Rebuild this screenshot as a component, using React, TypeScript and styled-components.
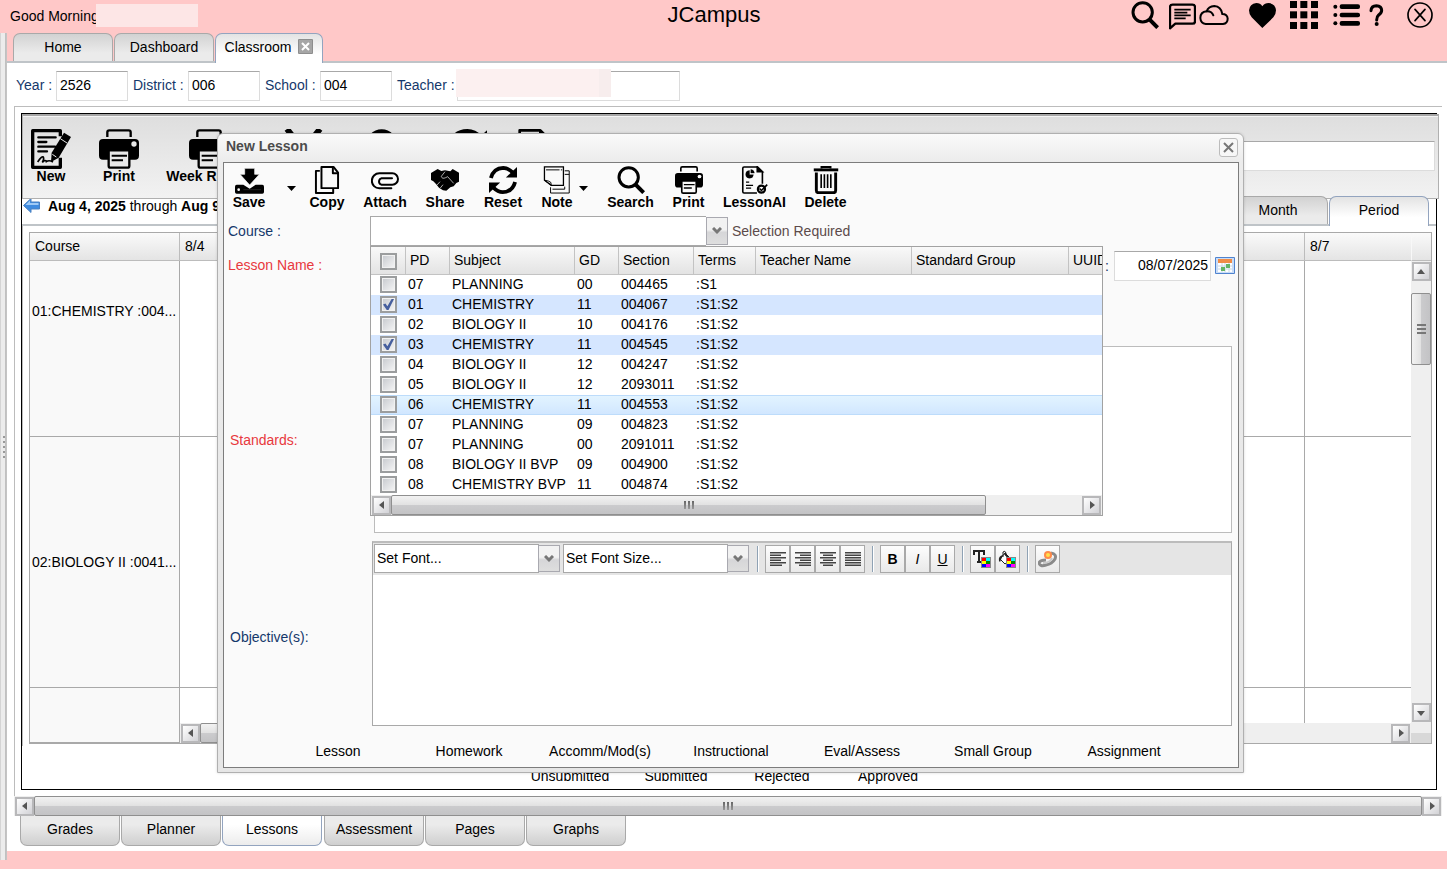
import React from 'react';
import styled, { createGlobalStyle, css } from 'styled-components';

const GlobalStyle = createGlobalStyle`
  *, *::before, *::after { box-sizing: border-box; }
  body { margin: 0; background: #ffc8c8; }
  body, input, button, select, table {
    font-family: "Liberation Sans", Arial, sans-serif;
    font-size: 14px;
    line-height: 16px;
    color: #000;
  }
  button { padding: 0; border: 0; background: none; cursor: pointer; }
`;

/* ---------- page shell ---------- */

const Page = styled.div`
  position: relative;
  display: flex;
  flex-direction: column;
  min-height: 100vh;
  overflow: hidden;
  background: #ffc8c8;
`;

const Header = styled.header`
  display: grid;
  grid-template-columns: 1fr auto 1fr;
  height: 33px;
  padding-right: 14px;
`;

const Greeting = styled.div`
  display: flex;
  align-items: center;
  padding: 0 0 2px 10px;
  white-space: nowrap;
`;

const HiddenName = styled.span`
  width: 102px;
  height: 23px;
  margin-left: -3px;
  background: #fde6e6;
`;

const Title = styled.h1`
  margin: 0;
  padding-right: 5px;
  font-size: 22px;
  line-height: 30px;
  font-weight: normal;
`;

const HeaderIcons = styled.nav`
  display: flex;
  align-items: flex-start;
  justify-content: flex-end;
`;

const HeaderButton = styled.button<{ $gap: number }>`
  display: flex;
  align-items: center;
  height: 30px;
  margin-left: ${(p) => p.$gap}px;
`;

const Body = styled.div`
  display: flex;
  flex: 1;
`;

const Splitter = styled.div`
  display: flex;
  flex-direction: column;
  align-items: center;
  justify-content: center;
  gap: 3px;
  width: 7px;
  margin-bottom: 9px;
  background: linear-gradient(to right, #d4d4d4 0 1px, #ececec 1px 5px, #c0c0c0 5px 6px, #c4c4c4 6px);
`;

const Grip = styled.i`
  width: 2px;
  height: 2px;
  background: #999;
`;

const Main = styled.main`
  display: flex;
  flex: 1;
  flex-direction: column;
  min-width: 0;
  padding-bottom: 18px;
`;

const TabStrip = styled.nav`
  display: flex;
  align-items: flex-start;
  gap: 1px;
  padding-left: 6px;
`;

const TopTab = styled.button<{ $active?: boolean }>`
  display: flex;
  align-items: center;
  justify-content: center;
  gap: 7px;
  width: 100px;
  height: 28px;
  padding-bottom: 2px;
  border: 1px solid #a9a9a9;
  border-bottom: 0;
  border-radius: 7px 7px 0 0;
  background: linear-gradient(#d2d2d2, #ebebeb 70%);
  ${(p) =>
    p.$active &&
    css`
      position: relative;
      z-index: 1;
      width: 108px;
      height: 30px;
      margin-bottom: -2px;
      padding-bottom: 4px;
      border-color: #93a4bf;
      background: linear-gradient(#e3e3e3, #ffffff 70%);
    `}
`;

const Panel = styled.section`
  display: flex;
  flex: 1;
  flex-direction: column;
  padding-bottom: 5px;
  border-top: 2px solid #bfc4c8;
  background: #fff;
`;

const FieldBar = styled.div`
  display: flex;
  height: 43px;
  padding: 8px 0 0 9px;
`;

const Field = styled.label<{ $width: number }>`
  display: flex;
  flex: none;
  width: ${(p) => p.$width}px;
  line-height: 28px;
  color: #15386b;
  white-space: nowrap;
`;

const Lead = styled.span`
  padding-left: 5px;
`;

const TextBox = styled.input`
  min-width: 0;
  height: 30px;
  padding: 0 3px 2px;
  border: 1px solid #dcdcdc;
  border-top-color: #a8a8a8;
  background: #fff;
  outline: none;
`;

const FieldInput = styled(TextBox)<{ $width: number }>`
  width: ${(p) => p.$width}px;
  margin-left: auto;
`;

const Masked = styled.span`
  position: relative;
  display: flex;
  margin-left: auto;
  &::after {
    content: '';
    position: absolute;
    top: -2px;
    left: -1px;
    width: 155px;
    height: 28px;
    background: linear-gradient(to right, #fcf0f0 143px, #f7eded 143px);
  }
`;

const Frame = styled.div`
  display: flex;
  flex: 1;
  flex-direction: column;
  margin: 0 5px 0 7px;
  padding: 6px 5px 6px 6px;
  border-top: 1px solid #bcbcbc;
  border-left: 1px solid #bcbcbc;
`;

const LessonBox = styled.div`
  display: flex;
  flex: 1;
  flex-direction: column;
  border: 1px solid #000;
`;

const MainToolbar = styled.div`
  --paper: #e9e9e9;
  position: relative;
  display: flex;
  height: 85px;
  margin-right: -3px;
  padding: 13px 3px 0 7px;
  border: 1px solid #b0b0b0;
  border-top: 2px solid #a6a6a6;
  background: linear-gradient(#dedede, #f2f2f2);
  box-shadow: inset 0 1px #f4f4f4;
  svg { margin-bottom: -1px; }
`;

const ToolButton = styled.button<{ $width: number; $after?: number }>`
  display: flex;
  flex: none;
  flex-direction: column;
  align-items: center;
  justify-content: flex-start;
  width: ${(p) => p.$width}px;
  margin-right: ${(p) => p.$after ?? 0}px;
  font-weight: bold;
  white-space: nowrap;
`;

const QuickBox = styled(TextBox)`
  flex: 1;
  margin-top: 12px;
`;

const DateBar = styled.div`
  display: flex;
  align-items: flex-start;
  justify-content: space-between;
  height: 27px;
  padding: 0 7px 0 1px;
  border-bottom: 2px solid #bfc4c8;
`;

const WeekRange = styled.div`
  display: flex;
  align-items: center;
  gap: 8px;
  height: 13px;
`;

const ViewTabs = styled.div`
  display: flex;
  align-items: flex-start;
  gap: 1px;
  height: 25px;
  margin-top: -3px;
`;

const ViewTab = styled(TopTab)`
  position: relative;
`;

const ViewTabActive = styled(TopTab)`
  width: 100px;
`;

const TabBody = styled.div`
  display: flex;
  flex: 1;
  flex-direction: column;
  padding: 6px 4px 2px 6px;
  border-left: 1px solid #bcbcbc;
`;

/* ---------- schedule grid ---------- */

const GridBox = styled.div`
  position: relative;
  flex: 1;
  min-height: 511px;
  overflow: hidden;
  border: 1px solid #a9a9a9;
`;

const Schedule = styled.table`
  width: 1650px;
  border-collapse: separate;
  border-spacing: 0;
  table-layout: fixed;
`;

const DayHead = styled.th`
  height: 28px;
  padding: 0 5px 2px;
  border-right: 1px solid #bcbcbc;
  border-bottom: 1px solid #bcbcbc;
  background: linear-gradient(#fafafa, #e4e4e4);
  font-weight: normal;
  text-align: left;
`;

const CourseCell = styled.th<{ $height: number; $lift?: number }>`
  height: ${(p) => p.$height}px;
  padding: 0 0 ${(p) => p.$lift ?? 0}px 2px;
  border-right: 1px solid #a9a9a9;
  border-bottom: 1px solid #a9a9a9;
  background: #f9f9f9;
  font-weight: normal;
  text-align: left;
  white-space: nowrap;
`;

const DayCell = styled.td`
  border-right: 1px solid #a9a9a9;
  border-bottom: 1px solid #a9a9a9;
  background: #fff;
`;

const HeadCorner = styled.div`
  position: absolute;
  top: 0;
  right: 0;
  width: 20px;
  height: 28px;
  border-left: 1px solid #f8f8f8;
  border-bottom: 1px solid #bcbcbc;
  background: linear-gradient(#fafafa, #e4e4e4);
`;

const Legend = styled.div`
  display: flex;
  justify-content: center;
  padding: 22px 0 5px;
  text-align: center;
`;

const LegendItem = styled.span`
  width: 106px;
`;

/* ---------- scroll bars ---------- */

const HBar = styled.div`
  display: flex;
  align-items: center;
  height: 20px;
  padding: 0 1px;
  background: #efefef;
`;

const GridHBar = styled(HBar)`
  position: absolute;
  right: 20px;
  bottom: 0;
  left: 150px;
`;

const VBar = styled.div`
  position: absolute;
  top: 28px;
  right: 0;
  bottom: 20px;
  display: flex;
  flex-direction: column;
  align-items: center;
  width: 20px;
  padding: 1px 0;
  background: #efefef;
`;

const BarCorner = styled.div`
  position: absolute;
  right: 0;
  bottom: 0;
  width: 20px;
  height: 20px;
  background: linear-gradient(#eee 50%, #d8d8d8 50%);
`;

const ArrowButton = styled.button`
  display: flex;
  flex: none;
  align-items: center;
  justify-content: center;
  width: 19px;
  height: 19px;
  border: 2px solid #b8b8ba;
  background: linear-gradient(135deg, #fff, #d2d2d6);
`;

const HThumb = styled.div<{ $width?: number }>`
  display: flex;
  flex: ${(p) => (p.$width ? 'none' : 1)};
  align-items: center;
  justify-content: center;
  gap: 2px;
  width: ${(p) => (p.$width ? `${p.$width}px` : 'auto')};
  height: 20px;
  border: 1px solid #8f8f8f;
  border-radius: 2px;
  background: linear-gradient(#f2f2f2, #e2e2e2 48%, #cbcbcd 52%, #c3c3c5);
  i { width: 2px; height: 8px; background: linear-gradient(#666, #999); }
`;

const VThumb = styled.div`
  display: flex;
  flex-direction: column;
  align-items: center;
  justify-content: center;
  gap: 2px;
  width: 20px;
  height: 72px;
  margin-top: 12px;
  border: 1px solid #8f8f8f;
  border-radius: 2px;
  background: linear-gradient(to right, #f2f2f2, #e2e2e2 48%, #cbcbcd 52%, #c3c3c5);
  i { width: 9px; height: 2px; background: #777; }
`;

const Push = styled.span`
  flex: 1;
`;

const FrameBar = styled(HBar)`
  margin: 0 5px 0 7px;
`;

const BottomTabs = styled.nav`
  display: flex;
  gap: 1px;
  padding-left: 13px;
`;

const BottomTab = styled.button<{ $active?: boolean }>`
  width: 100px;
  height: 30px;
  margin-right: ${(p) => (p.$active ? 1 : 0)}px;
  padding-bottom: 4px;
  border: 1px solid ${(p) => (p.$active ? '#93a4bf' : '#a9a9a9')};
  border-top: 0;
  border-radius: 0 0 7px 7px;
  background: ${(p) => (p.$active ? 'linear-gradient(#fff 30%, #ececec)' : 'linear-gradient(#ebebeb 30%, #cfcfcf)')};
`;

/* ---------- dialog ---------- */

const Dialog = styled.section`
  --paper: #fafafa;
  position: absolute;
  top: 133px;
  right: 203px;
  left: 217px;
  z-index: 5;
  padding: 0 4px 4px 5px;
  border: 1px solid #b0b0b0;
  border-radius: 6px 6px 0 0;
  background: linear-gradient(#fafafa, #ececec 28px, #e6e6e6);
  box-shadow: 0 0 3px rgba(0, 0, 0, 0.15);
`;

const DialogTitle = styled.header`
  display: flex;
  align-items: center;
  justify-content: space-between;
  height: 28px;
  padding: 0 1px 4px 3px;
  h2 { margin: 0; font-size: 14px; color: #4c4c4c; }
`;

const CloseButton = styled.button`
  display: flex;
  align-items: center;
  justify-content: center;
  width: 19px;
  height: 19px;
  border: 1px solid #bcbcbc;
  border-radius: 3px;
  margin-top: 3px;
  background: #f7f7f7;
`;

const DialogBody = styled.form`
  border: 1px solid #7c7c7c;
  background: #fafafa;
`;

const DialogTools = styled.div`
  display: flex;
  height: 53px;
  padding: 3px 0 0 2px;
`;

const CaretButton = styled.button<{ $width: number; $after?: number }>`
  width: ${(p) => p.$width}px;
  height: 28px;
  margin: 6px ${(p) => p.$after ?? 0}px 0 0;
`;

const FormRow = styled.div<{ $height: number; $top?: number }>`
  display: flex;
  align-items: flex-start;
  height: ${(p) => p.$height}px;
  padding-top: ${(p) => p.$top ?? 0}px;
  padding-right: 6px;
`;

const RowLabel = styled.label<{ $width: number; $indent: number; $required?: boolean; $lift?: number }>`
  flex: none;
  align-self: center;
  width: ${(p) => p.$width}px;
  padding-left: ${(p) => p.$indent}px;
  padding-bottom: ${(p) => p.$lift ?? 0}px;
  color: ${(p) => (p.$required ? '#e8383d' : '#15386b')};
`;

const Combo = styled.div`
  position: relative;
  display: flex;
  width: 358px;
`;

const ComboInput = styled(TextBox)`
  flex: 1;
  border-color: #a8a8a8;
  border-right: 0;
`;

const Trigger = styled.button`
  display: flex;
  align-items: center;
  justify-content: center;
  width: 22px;
  height: 28px;
  margin-top: 1px;
  border: 1px solid #a9a9b0;
  background: linear-gradient(#f2f2f2 45%, #d6d6d8 55%, #dedede);
`;

const Hint = styled.span`
  align-self: center;
  margin-left: 4px;
  color: #5c4a4a;
`;

const DateLabel = styled.label`
  display: flex;
  align-items: center;
  gap: 5px;
  margin-left: auto;
  color: #15386b;
`;

const DateBox = styled(TextBox)`
  width: 97px;
  padding-right: 2px;
  text-align: right;
`;

const CalendarButton = styled.button`
  display: flex;
  margin: 6px -3px 0 4px;
`;

const StandardsBox = styled.textarea`
  flex: 1;
  height: 187px;
  margin-left: 2px;
  border: 1px solid #bcbcbc;
  background: #fff;
  resize: none;
  outline: none;
`;

const Editor = styled.div`
  flex: 1;
  height: 185px;
  border: 1px solid #a9a9a9;
  border-top: 2px solid #bcbcbc;
  background: #fff;
`;

const EditorBar = styled.div`
  display: flex;
  align-items: flex-start;
  height: 32px;
  padding: 1px;
  background: #e5e5e5;
`;

const SelectWrap = styled.span`
  position: relative;
  flex: none;
  width: 186px;
  margin-right: 3px;
  & + & { margin-right: 1px; }
`;

const Select = styled.select`
  width: 165px;
  height: 29px;
  padding: 0 2px 2px;
  border: 1px solid #a8a8a8;
  border-radius: 0;
  background: #fff;
  appearance: none;
  outline: none;
`;

const SelectArrow = styled.span`
  position: absolute;
  top: 1px;
  right: 0;
  display: flex;
  align-items: center;
  justify-content: center;
  width: 22px;
  height: 27px;
  border: 1px solid #a9a9b0;
  background: linear-gradient(#f2f2f2 45%, #d6d6d8 55%, #dedede);
  pointer-events: none;
`;

const Divider = styled.span`
  width: 2px;
  height: 26px;
  margin: 2px 6px 0 7px;
  border-left: 1px solid #8fa2b4;
  border-right: 1px solid #fff;
`;

const FormatButton = styled.button<{ $style?: 'bold' | 'italic' | 'underline' }>`
  display: flex;
  flex: none;
  align-items: center;
  justify-content: center;
  width: 25px;
  height: 28px;
  margin-top: 1px;
  border: 1px solid #a9a9a9;
  background: linear-gradient(#fdfdfd, #e9e9e9);
  font-weight: ${(p) => (p.$style === 'bold' ? 'bold' : 'normal')};
  font-style: ${(p) => (p.$style === 'italic' ? 'italic' : 'normal')};
  text-decoration: ${(p) => (p.$style === 'underline' ? 'underline' : 'none')};
`;

const SectionTabs = styled.nav`
  display: flex;
  justify-content: center;
  height: 34px;
`;

const SectionTab = styled.button`
  width: 131px;
  padding-top: 2px;
`;

/* ---------- course menu ---------- */

const Menu = styled.div`
  position: absolute;
  top: 30px;
  left: 0;
  z-index: 2;
  width: 733px;
  overflow: hidden;
  border: 1px solid #a2a2a2;
  background: #fff;
`;

const MenuTable = styled.table`
  width: 731px;
  border-collapse: separate;
  border-spacing: 0;
  table-layout: fixed;
`;

const MenuHead = styled.th<{ $width: number }>`
  width: ${(p) => p.$width}px;
  height: 28px;
  padding: 0 0 2px 4px;
  overflow: hidden;
  border-right: 1px solid #c3c3c3;
  border-bottom: 1px solid #c3c3c3;
  background: linear-gradient(#f9f9f9, #e3e3e3);
  font-weight: normal;
  text-align: left;
  white-space: nowrap;
  &:first-child { padding: 2px 0 0; }
  &:last-child { border-right: 0; }
`;

const rowTone = {
  plain: css`background: #fff;`,
  picked: css`background: #d5e6ff;`,
  hover: css`
    background: linear-gradient(#e3f4ff, #d0e6ff);
    box-shadow: inset 0 1px #bddcfb, inset 0 -1px #bddcfb;
  `,
};

const MenuRow = styled.tr<{ $tone: keyof typeof rowTone }>`
  ${(p) => rowTone[p.$tone]}
`;

const MenuCell = styled.td`
  height: 20px;
  padding: 0 0 2px 2px;
  white-space: nowrap;
  &:first-child { padding: 0 0 1px; }
`;

const Check = styled.input`
  display: block;
  position: relative;
  width: 17px;
  height: 17px;
  margin: 0 auto;
  border: 2px solid #9b9d9e;
  background: linear-gradient(135deg, #c6c9ce, #f6f6f6);
  box-shadow: inset 0 0 0 1px #f1f1f1;
  appearance: none;
  &:checked::before {
    content: '';
    position: absolute;
    inset: 1px;
    background: #465f9e;
    clip-path: polygon(0 50%, 22% 40%, 40% 65%, 78% 0, 100% 0, 50% 100%, 34% 100%);
  }
`;

/* ---------- icons ---------- */

type Size = { size: number };

const SearchIcon = ({ size }: Size) => (
  <svg width={size} height={size} viewBox="0 0 84 84" fill="none" stroke="#000">
    <circle cx="35" cy="34" r="29" strokeWidth="9" />
    <path d="M56 56 80 80" strokeWidth="12" />
  </svg>
);

const MessageIcon = () => (
  <svg width="27" height="30" viewBox="0 -9 81 90" fill="none" stroke="#000">
    <path d="M3 76V12Q3 5 11 5H70Q78 5 78 12V55Q78 62 70 62H19Z" strokeWidth="7" strokeLinejoin="round" />
    <path d="M16 20H65M16 29H55M16 37H65M16 46H50" strokeWidth="5" />
  </svg>
);

const CloudIcon = () => (
  <svg width="30" height="22" viewBox="0 0 90 66" fill="none" stroke="#000" strokeWidth="6">
    <path d="M20 60H72Q86 58 86 44 85 30 70 30 66 7 46 6 28 7 23 22 4 24 4 42 5 58 20 60Z" />
    <path d="M23 22Q38 21 43 34" strokeLinecap="round" />
  </svg>
);

const HeartIcon = () => (
  <svg width="27" height="25" viewBox="0 0 81 75">
    <path d="M40 75 8 43Q0 34 0 22 2 2 22 0 34 0 40 10 47 0 59 0 79 2 81 22 81 34 73 43Z" />
  </svg>
);

const AppsIcon = () => (
  <svg width="28" height="28" viewBox="0 0 84 84">
    {[0, 31, 63].map((y) => [0, 31, 63].map((x) => <rect key={`${x}-${y}`} x={x} y={y} width="21" height="21" />))}
  </svg>
);

const ListIcon = () => (
  <svg width="27" height="22" viewBox="0 0 81 66">
    {[0, 25, 50].map((y) => (
      <g key={y}>
        <circle cx="7" cy={y + 8} r="6" />
        <rect x="20" y={y + 1} width="61" height="14" rx="6" />
      </g>
    ))}
  </svg>
);

const HelpIcon = () => (
  <svg width="15" height="22" viewBox="0 0 45 66">
    <path d="M6 20Q7 5 22 5 38 6 38 19 38 27 29 33 23 38 23 48" fill="none" stroke="#000" strokeWidth="9" strokeLinecap="round" />
    <circle cx="23" cy="60" r="6" />
  </svg>
);

const ExitIcon = () => (
  <svg width="26" height="26" viewBox="0 0 78 78" fill="none" stroke="#000">
    <circle cx="39" cy="39" r="36" strokeWidth="5" />
    <path d="M24 22 54 56M54 22 24 56" strokeWidth="5" strokeLinecap="round" />
  </svg>
);

const TabCloseIcon = () => (
  <svg width="15" height="15" viewBox="0 0 15 15">
    <rect width="15" height="15" rx="1" fill="#8e8e8e" />
    <rect x="1" y="1" width="13" height="13" fill="#a6a6a6" />
    <path d="M4 4 11 11M11 4 4 11" stroke="#fff" strokeWidth="2" />
  </svg>
);

const NewIcon = () => (
  <svg width="40" height="40" viewBox="0 0 120 120" fill="none" stroke="#000">
    <path d="M88 22V5H5V115H88V86" strokeWidth="10" strokeLinejoin="round" />
    <path d="M22 25H74M22 39H46M22 53H72M22 67H48" strokeWidth="7" strokeLinecap="round" />
    <path d="M20 99Q32 80 37 84 40 90 34 100 44 90 46 98 54 92 66 99" strokeWidth="5" />
    <path d="M99 11 120 24 83 86 60 99 62 71Z" fill="#000" stroke="none" />
    <path d="M88 29 108 42M64 76 76 84" strokeWidth="3" stroke="var(--paper)" />
  </svg>
);

const PrintIcon = ({ size }: Size) => (
  <svg width={size} height={size} viewBox="0 0 120 120">
    <path d="M25 24V10Q25 4 31 4H89Q95 4 95 10V24" fill="none" stroke="#000" strokeWidth="7" />
    <rect y="30" width="120" height="62" rx="12" />
    <circle cx="105" cy="45" r="8" fill="var(--paper)" />
    <path d="M29 64H91V110Q91 116 85 116H35Q29 116 29 110Z" fill="var(--paper)" stroke="#000" strokeWidth="7" />
    <path d="M38 80H84M38 94H72" stroke="#000" strokeWidth="6" />
  </svg>
);

const ToolsIcon = () => (
  <svg width="40" height="40" viewBox="0 0 40 40" fill="none" stroke="#000" strokeWidth="6">
    <path d="M4 0 33 38M37 0 7 38" />
  </svg>
);

const ResetIcon = ({ size }: Size) => (
  <svg width={size} height={size} viewBox="0 0 88 88">
    <g>
      <path d="M6 38Q14 7 45 6 60 6 74 20" fill="none" stroke="#000" strokeWidth="12" />
      <path d="M88 3V36H53Z" />
    </g>
    <g transform="rotate(180 44 44)">
      <path d="M6 38Q14 7 45 6 60 6 74 20" fill="none" stroke="#000" strokeWidth="12" />
      <path d="M88 3V36H53Z" />
    </g>
  </svg>
);

const FileIcon = () => (
  <svg width="40" height="40" viewBox="0 0 120 120" fill="none" stroke="#000" strokeWidth="8">
    <path d="M14 116V4H76L100 28V116Z" strokeLinejoin="round" />
    <path d="M76 4V28H100" />
  </svg>
);

const SaveIcon = () => (
  <svg width="29" height="28" viewBox="0 0 87 84">
    <path d="M0 62Q0 56 5 56H25L44 68 62 56H82Q87 56 87 62V78Q87 83 82 83H5Q0 83 0 78Z" />
    <path d="M29 7H59V25H73L44 57 15 25H29Z" stroke="#fafafa" strokeWidth="2" />
    <circle cx="11" cy="71" r="4" fill="#fafafa" />
    <path d="M25 71H78" stroke="#333" strokeWidth="2" />
  </svg>
);

const CopyIcon = () => (
  <svg width="28" height="28" viewBox="0 0 84 86" fill="none" stroke="#000" strokeWidth="6" strokeLinejoin="round">
    <path d="M20 15H8V83H61V70" />
    <path d="M25 3H62L76 20V68H25Z" />
    <path d="M60 4V22H76" />
  </svg>
);

const AttachIcon = () => (
  <svg width="28" height="28" viewBox="0 0 84 84" fill="none" stroke="#000" strokeWidth="6" strokeLinecap="round">
    <path d="M61 67H25A22 22 0 0 1 25 22H64A17 17 0 0 1 64 56H31A10 10 0 0 1 31 37H63" />
  </svg>
);

const ShareIcon = () => (
  <svg width="28" height="28" viewBox="0 0 84 84">
    <path d="M0 21 20 9 31 15 42 13 58 16 65 9 84 20V47L76 51 68 61 58 64 46 74 36 73 24 65 15 54 7 46 0 42Z" />
    <path d="M42 17 31 31Q33 40 44 35L50 32 68 52M18 57 27 47M28 66 36 56" fill="none" stroke="#fafafa" strokeWidth="2" />
  </svg>
);

const NoteIcon = () => (
  <svg width="28" height="28" viewBox="0 0 84 87" fill="none" stroke="#000" strokeWidth="4">
    <path d="M3 44V3H62V60H24Z" />
    <path d="M3 44 24 60Q26 49 16 47L3 44M8 12H50M54 12H58" strokeWidth="3" />
    <path d="M66 15H80V84H22V66M66 26H80M66 64V72H28" strokeWidth="3" />
  </svg>
);

const LessonIcon = () => (
  <svg width="28" height="28" viewBox="0 0 84 87" fill="none" stroke="#000" strokeWidth="5">
    <path d="M48 84H8Q4 84 4 79V7Q4 3 8 3H50L65 18V55" />
    <path d="M49 3V18H65Z" fill="#000" />
    <path d="M25 14A12 12 0 1 0 37 27H25Z" fill="#000" strokeWidth="1" />
    <path d="M29 11A12 12 0 0 1 40 22H29Z" fill="#000" strokeWidth="1" />
    <path d="M14 50H24M14 60H36M14 69H30" strokeWidth="4" />
    <circle cx="62" cy="72" r="11" strokeWidth="7" />
    <path d="M56 70 62 76 80 58" strokeWidth="5" />
  </svg>
);

const DeleteIcon = () => (
  <svg width="28" height="28" viewBox="0 0 84 87" fill="none" stroke="#000">
    <path d="M28 8V3H56V8" strokeWidth="6" />
    <path d="M4 12H80" strokeWidth="9" />
    <path d="M12 20V76Q12 83 19 83H65Q72 83 72 76V20" strokeWidth="9" />
    <path d="M27 26V68M37 26V68M47 26V68M57 26V68" strokeWidth="5" />
  </svg>
);

const CaretIcon = () => (
  <svg width="9" height="5" viewBox="0 0 18 10">
    <path d="M0 0H18L9 10Z" />
  </svg>
);

const ChevronIcon = () => (
  <svg width="10" height="8" viewBox="0 0 10 8">
    <path d="M1 1 5 5 9 1" fill="none" stroke="#777" strokeWidth="3" />
  </svg>
);

const BackIcon = () => (
  <svg width="17" height="15" viewBox="0 0 34 30">
    <path d="M1 15 16 1V8H33V22H16V29Z" fill="#3f8be0" stroke="#4a80c0" strokeWidth="2" />
    <path d="M5 14 14 5V10H31V14Z" fill="#9fcaf6" />
  </svg>
);

const CalendarIcon = () => (
  <svg width="20" height="17" viewBox="0 0 20 17">
    <rect width="20" height="17" rx="1" fill="#4f83cf" />
    <rect x="1" y="1" width="18" height="15" fill="#c8dcf7" />
    <rect x="3" y="2" width="14" height="13" fill="#fff" />
    <rect x="3" y="2" width="14" height="4" fill="#f08c46" />
    <path d="M3 9H17M3 12H17M7 6V15M10 6V15M14 6V15" stroke="#c9d6e2" />
    <path d="M11 7H15V11H11ZM6 10H10V14H6Z" fill="#64b464" />
  </svg>
);

const Arrow = ({ turn }: { turn: number }) => (
  <svg width="8" height="8" viewBox="0 0 8 8">
    <path d="M6 0V8L1 4Z" fill="#555" transform={`rotate(${turn} 4 4)`} />
  </svg>
);

const CrossIcon = () => (
  <svg width="11" height="11" viewBox="0 0 11 11">
    <path d="M1 1 10 10M10 1 1 10" stroke="#777" strokeWidth="2" />
  </svg>
);

const alignLines: Record<string, number[][]> = {
  left: [[0, 16], [0, 11], [0, 16], [0, 11], [0, 16], [0, 12]],
  right: [[0, 16], [5, 16], [0, 16], [5, 16], [0, 16], [4, 16]],
  center: [[0, 16], [3, 13], [0, 16], [3, 13], [0, 16], [3, 13]],
  justify: [[0, 16], [0, 16], [0, 16], [0, 16], [0, 16], [0, 16]],
};

const AlignIcon = ({ mode }: { mode: string }) => (
  <svg width="16" height="16" viewBox="0 0 32 32">
    {alignLines[mode].map(([from, to], i) => (
      <rect key={i} x={from * 2} y={2 + i * 5} width={(to - from) * 2} height="3" fill="#444" />
    ))}
  </svg>
);

const swatches = ['#f00', '#0ff', '#ff0', '#080', '#00f', '#f0f'];
const Swatches = () => (
  <g>
    <rect x="8" y="7" width="10" height="11" fill="#888" />
    {swatches.map((fill, i) => (
      <rect key={fill} x={9 + (i % 2) * 4} y={8 + Math.floor(i / 2) * 3} width="4" height="3" fill={fill} />
    ))}
  </g>
);

const TextColorIcon = () => (
  <svg width="19" height="18" viewBox="0 0 19 18">
    <path d="M1 5V1H11V5M6 1V12M4 12H8" fill="none" stroke="#222" strokeWidth="2" />
    <Swatches />
  </svg>
);

const FillColorIcon = () => (
  <svg width="19" height="18" viewBox="0 0 19 18">
    <path d="M7 3 13 9 7 14 2 9Z" fill="#fff" stroke="#222" />
    <path d="M5 7V2Q7 0 8 3V6" fill="none" stroke="#222" />
    <path d="M7 3 13 9 11 10 6 4Z" fill="#222" />
    <path d="M1 11Q0 6 5 5L2 12Z" fill="#222" />
    <Swatches />
  </svg>
);

const LinkIcon = () => (
  <svg width="19" height="18" viewBox="0 0 19 18" fill="none">
    <path d="M13 3Q19 4 17 9 14 14 8 15 2 17 1 13 2 10 8 10" stroke="#8a8a8a" strokeWidth="3" />
    <path d="M5 13Q12 13 14 8" stroke="#c8c8c8" strokeWidth="2" />
    <circle cx="10" cy="5" r="4" fill="#ff8a4a" />
    <circle cx="10" cy="5" r="2" fill="#ffe14a" />
  </svg>
);

/* ---------- data ---------- */

const headColumns: [string, number][] = [
  ['PD', 44], ['Subject', 125], ['GD', 44], ['Section', 75], ['Terms', 62],
  ['Teacher Name', 156], ['Standard Group', 157], ['UUID', 33],
];

type Tone = keyof typeof rowTone;
const courses: [string, string, string, string, string, Tone][] = [
  ['07', 'PLANNING', '00', '004465', ':S1', 'plain'],
  ['01', 'CHEMISTRY', '11', '004067', ':S1:S2', 'picked'],
  ['02', 'BIOLOGY II', '10', '004176', ':S1:S2', 'plain'],
  ['03', 'CHEMISTRY', '11', '004545', ':S1:S2', 'picked'],
  ['04', 'BIOLOGY II', '12', '004247', ':S1:S2', 'plain'],
  ['05', 'BIOLOGY II', '12', '2093011', ':S1:S2', 'plain'],
  ['06', 'CHEMISTRY', '11', '004553', ':S1:S2', 'hover'],
  ['07', 'PLANNING', '09', '004823', ':S1:S2', 'plain'],
  ['07', 'PLANNING', '00', '2091011', ':S1:S2', 'plain'],
  ['08', 'BIOLOGY II BVP', '09', '004900', ':S1:S2', 'plain'],
  ['08', 'CHEMISTRY BVP', '11', '004874', ':S1:S2', 'plain'],
];

const sections = ['Lesson', 'Homework', 'Accomm/Mod(s)', 'Instructional', 'Eval/Assess', 'Small Group', 'Assignment'];

const CourseMenu = () => (
  <Menu>
    <MenuTable>
      <thead>
        <tr>
          <MenuHead $width={35}><Check type="checkbox" aria-label="Select all" /></MenuHead>
          {headColumns.map(([name, width]) => (
            <MenuHead key={name} $width={width}>{name}</MenuHead>
          ))}
        </tr>
      </thead>
      <tbody>
        {courses.map((c) => (
          <MenuRow key={c[3]} $tone={c[5]}>
            <MenuCell><Check type="checkbox" aria-label={c[3]} defaultChecked={c[5] === 'picked'} /></MenuCell>
            {c.slice(0, 5).map((text, i) => <MenuCell key={i}>{text}</MenuCell>)}
            <MenuCell /><MenuCell /><MenuCell />
          </MenuRow>
        ))}
      </tbody>
    </MenuTable>
    <HBar>
      <ArrowButton type="button" aria-label="Scroll left"><Arrow turn={0} /></ArrowButton>
      <HThumb $width={595}><i /><i /><i /></HThumb>
      <Push />
      <ArrowButton type="button" aria-label="Scroll right"><Arrow turn={180} /></ArrowButton>
    </HBar>
  </Menu>
);

const NewLessonDialog = () => (
  <Dialog role="dialog" aria-labelledby="dialog-title">
    <DialogTitle>
      <h2 id="dialog-title">New Lesson</h2>
      <CloseButton aria-label="Close"><CrossIcon /></CloseButton>
    </DialogTitle>
    <DialogBody>
      <DialogTools>
        <ToolButton type="button" $width={46}><SaveIcon />Save</ToolButton>
        <CaretButton type="button" $width={38} aria-label="Save options"><CaretIcon /></CaretButton>
        <ToolButton type="button" $width={34} $after={20}><CopyIcon />Copy</ToolButton>
        <ToolButton type="button" $width={42} $after={20}><AttachIcon />Attach</ToolButton>
        <ToolButton type="button" $width={38} $after={20}><ShareIcon />Share</ToolButton>
        <ToolButton type="button" $width={38} $after={20}><ResetIcon size={28} />Reset</ToolButton>
        <ToolButton type="button" $width={30}><NoteIcon />Note</ToolButton>
        <CaretButton type="button" $width={23} $after={13} aria-label="Note options"><CaretIcon /></CaretButton>
        <ToolButton type="button" $width={45} $after={20}><SearchIcon size={28} />Search</ToolButton>
        <ToolButton type="button" $width={31} $after={20}><PrintIcon size={28} />Print</ToolButton>
        <ToolButton type="button" $width={61} $after={20}><LessonIcon />LessonAI</ToolButton>
        <ToolButton type="button" $width={41}><DeleteIcon />Delete</ToolButton>
      </DialogTools>
      <FormRow $height={30}>
        <RowLabel htmlFor="course" $width={146} $indent={4}>Course :</RowLabel>
        <Combo>
          <ComboInput id="course" />
          <Trigger type="button" aria-label="Open course list"><ChevronIcon /></Trigger>
          <CourseMenu />
        </Combo>
        <Hint>Selection Required</Hint>
      </FormRow>
      <FormRow $height={35} $top={5}>
        <RowLabel as="span" $width={146} $indent={4} $lift={2} $required>Lesson Name :</RowLabel>
        <DateLabel>:<DateBox defaultValue="08/07/2025" /></DateLabel>
        <CalendarButton type="button" aria-label="Pick a date"><CalendarIcon /></CalendarButton>
      </FormRow>
      <FormRow $height={260} $top={65}>
        <RowLabel htmlFor="standards" $width={148} $indent={6} $lift={8} $required>Standards:</RowLabel>
        <StandardsBox id="standards" />
      </FormRow>
      <FormRow $height={192}>
        <RowLabel as="span" $width={148} $indent={6}>Objective(s):</RowLabel>
        <Editor>
          <EditorBar>
            <SelectWrap>
              <Select aria-label="Font"><option>Set Font...</option></Select>
              <SelectArrow><ChevronIcon /></SelectArrow>
            </SelectWrap>
            <SelectWrap>
              <Select aria-label="Font size"><option>Set Font Size...</option></Select>
              <SelectArrow><ChevronIcon /></SelectArrow>
            </SelectWrap>
            <Divider />
            {Object.keys(alignLines).map((mode) => (
              <FormatButton key={mode} type="button" aria-label={`Align ${mode}`}><AlignIcon mode={mode} /></FormatButton>
            ))}
            <Divider />
            <FormatButton type="button" $style="bold">B</FormatButton>
            <FormatButton type="button" $style="italic">I</FormatButton>
            <FormatButton type="button" $style="underline">U</FormatButton>
            <Divider />
            <FormatButton type="button" aria-label="Text color"><TextColorIcon /></FormatButton>
            <FormatButton type="button" aria-label="Fill color"><FillColorIcon /></FormatButton>
            <Divider />
            <FormatButton type="button" aria-label="Insert link"><LinkIcon /></FormatButton>
          </EditorBar>
        </Editor>
      </FormRow>
      <SectionTabs>
        {sections.map((name) => <SectionTab key={name} type="button">{name}</SectionTab>)}
      </SectionTabs>
    </DialogBody>
  </Dialog>
);

const ScheduleGrid = () => (
  <GridBox>
    <Schedule>
      <colgroup>
        <col width="150" /><col width="375" /><col width="375" /><col width="375" /><col width="375" />
      </colgroup>
      <thead>
        <tr>
          <DayHead>Course</DayHead><DayHead>8/4</DayHead><DayHead>8/5</DayHead><DayHead>8/6</DayHead><DayHead>8/7</DayHead>
        </tr>
      </thead>
      <tbody>
        <tr>
          <CourseCell $height={176} $lift={76} scope="row">01:CHEMISTRY :004...</CourseCell>
          <DayCell /><DayCell /><DayCell /><DayCell />
        </tr>
        <tr>
          <CourseCell $height={251} scope="row">02:BIOLOGY II :0041...</CourseCell>
          <DayCell /><DayCell /><DayCell /><DayCell />
        </tr>
        <tr>
          <CourseCell $height={55} />
          <DayCell /><DayCell /><DayCell /><DayCell />
        </tr>
      </tbody>
    </Schedule>
    <HeadCorner />
    <VBar>
      <ArrowButton aria-label="Scroll up"><Arrow turn={90} /></ArrowButton>
      <VThumb><i /><i /><i /></VThumb>
      <Push />
      <ArrowButton aria-label="Scroll down"><Arrow turn={270} /></ArrowButton>
    </VBar>
    <GridHBar>
      <ArrowButton aria-label="Scroll left"><Arrow turn={0} /></ArrowButton>
      <HThumb $width={480} />
      <Push />
      <ArrowButton aria-label="Scroll right"><Arrow turn={180} /></ArrowButton>
    </GridHBar>
    <BarCorner />
  </GridBox>
);

export default function App() {
  return (
    <>
      <GlobalStyle />
      <Page>
        <Header>
          <Greeting>Good Morning<HiddenName /></Greeting>
          <Title>JCampus</Title>
          <HeaderIcons>
            <HeaderButton $gap={0} aria-label="Search"><SearchIcon size={28} /></HeaderButton>
            <HeaderButton $gap={10} aria-label="Messages"><MessageIcon /></HeaderButton>
            <HeaderButton $gap={3} aria-label="Cloud"><CloudIcon /></HeaderButton>
            <HeaderButton $gap={20} aria-label="Favorites"><HeartIcon /></HeaderButton>
            <HeaderButton $gap={14} aria-label="Apps"><AppsIcon /></HeaderButton>
            <HeaderButton $gap={15} aria-label="Menu"><ListIcon /></HeaderButton>
            <HeaderButton $gap={9} aria-label="Help"><HelpIcon /></HeaderButton>
            <HeaderButton $gap={23} aria-label="Log out"><ExitIcon /></HeaderButton>
          </HeaderIcons>
        </Header>
        <Body>
          <Splitter><Grip /><Grip /><Grip /><Grip /><Grip /></Splitter>
          <Main>
            <TabStrip>
              <TopTab>Home</TopTab>
              <TopTab>Dashboard</TopTab>
              <TopTab $active>Classroom<TabCloseIcon /></TopTab>
            </TabStrip>
            <Panel>
              <FieldBar>
                <Field $width={112}>Year :<FieldInput $width={72} defaultValue="2526" /></Field>
                <Field $width={132}><Lead>District :</Lead><FieldInput $width={72} defaultValue="006" /></Field>
                <Field $width={132}><Lead>School :</Lead><FieldInput $width={72} defaultValue="004" /></Field>
                <Field $width={288}><Lead>Teacher :</Lead><Masked><FieldInput $width={223} /></Masked></Field>
              </FieldBar>
              <Frame>
                <LessonBox>
                  <MainToolbar>
                    <ToolButton $width={42} $after={26}><NewIcon />New</ToolButton>
                    <ToolButton $width={42} $after={26}><PrintIcon size={40} />Print</ToolButton>
                    <ToolButton $width={86} $after={30}><PrintIcon size={40} />Week Report</ToolButton>
                    <ToolButton $width={42} $after={40} aria-label="Tools"><ToolsIcon /></ToolButton>
                    <ToolButton $width={42} $after={40} aria-label="Search"><SearchIcon size={40} /></ToolButton>
                    <ToolButton $width={42} $after={26} aria-label="Reset"><ResetIcon size={40} /></ToolButton>
                    <ToolButton $width={42} $after={26} aria-label="Report"><FileIcon /></ToolButton>
                    <QuickBox aria-label="Filter" />
                  </MainToolbar>
                  <DateBar>
                    <WeekRange>
                      <BackIcon />
                      <span><b>Aug 4, 2025</b> through <b>Aug 9</b></span>
                    </WeekRange>
                    <ViewTabs>
                      <ViewTab>Month</ViewTab>
                      <ViewTabActive $active>Period</ViewTabActive>
                    </ViewTabs>
                  </DateBar>
                  <TabBody><ScheduleGrid /></TabBody>
                  <Legend>
                    {['Unsubmitted', 'Submitted', 'Rejected', 'Approved'].map((name) => (
                      <LegendItem key={name}>{name}</LegendItem>
                    ))}
                  </Legend>
                </LessonBox>
              </Frame>
              <FrameBar>
                <ArrowButton aria-label="Scroll left"><Arrow turn={0} /></ArrowButton>
                <HThumb><i /><i /><i /></HThumb>
                <ArrowButton aria-label="Scroll right"><Arrow turn={180} /></ArrowButton>
              </FrameBar>
              <BottomTabs>
                {['Grades', 'Planner', 'Lessons', 'Assessment', 'Pages', 'Graphs'].map((name) => (
                  <BottomTab key={name} $active={name === 'Lessons'}>{name}</BottomTab>
                ))}
              </BottomTabs>
            </Panel>
          </Main>
        </Body>
        <NewLessonDialog />
      </Page>
    </>
  );
}
